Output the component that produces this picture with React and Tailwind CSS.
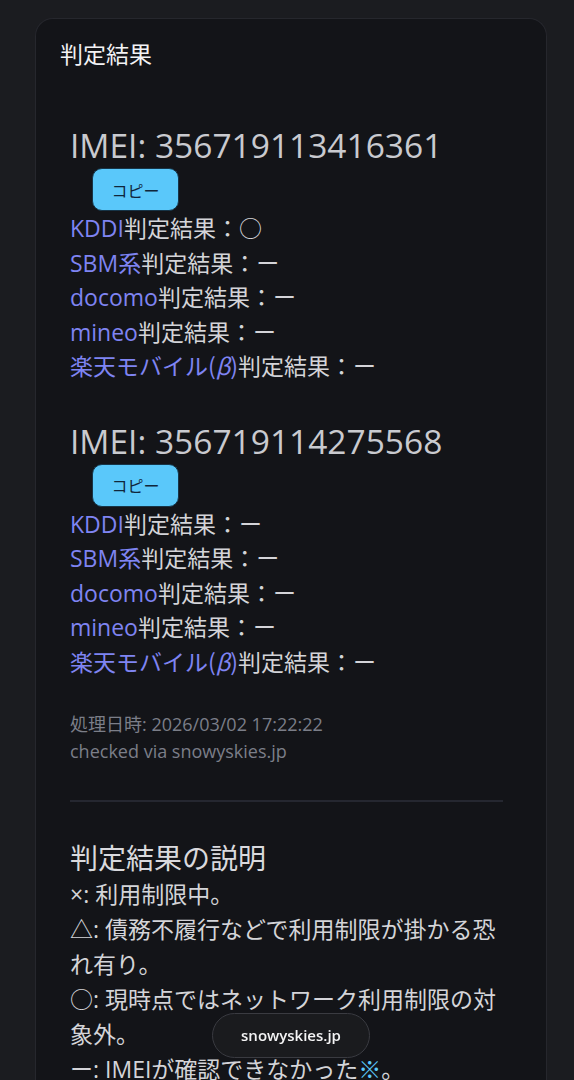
const font = { fontFamily: '"Open Sans", "Noto Sans CJK JP", sans-serif' };
const cjk = { fontFamily: '"Noto Sans CJK JP", sans-serif' };

const carriers = [
  { name: "KDDI", key: "kddi" },
  { name: "SBM系", key: "sbm" },
  { name: "docomo", key: "docomo" },
  { name: "mineo", key: "mineo" },
  { name: "楽天モバイル", beta: true, key: "rakuten" },
];

const results = [
  { imei: "356719113416361", status: { kddi: "○", sbm: "ー", docomo: "ー", mineo: "ー", rakuten: "ー" } },
  { imei: "356719114275568", status: { kddi: "ー", sbm: "ー", docomo: "ー", mineo: "ー", rakuten: "ー" } },
];

function ResultBlock({ item, first }) {
  return (
    <div className={first ? "mt-[58px]" : "mt-[39px]"}>
      <p className="text-[33.5px] leading-[36px] text-[#c9cacf]">IMEI: {item.imei}</p>
      <button className="mt-[5px] ml-[22px] w-[87px] h-[43px] rounded-[10px] border border-[#163447] bg-[#5ac8fa] text-[16px] text-[#10263a]" style={cjk}>
        コピー
      </button>
      <ul className="text-[23px] leading-[34.5px] text-[#d4d4d8]">
        {carriers.map((c) => (
          <li key={c.key}>
            <span className="text-[#7f84f2]">
              {c.name}
              {c.beta && (
                <span className="leading-none" style={cjk}>
                  (<span className="italic">β</span>)
                </span>
              )}
            </span>
            判定結果：{item.status[c.key]}
          </li>
        ))}
      </ul>
    </div>
  );
}

export default function App() {
  return (
    <div className="min-h-screen bg-[#1b1c20] pl-[35px] pr-[27px] pt-[18px]" style={font}>
      <div className="rounded-t-[18px] border border-b-0 border-[#26272d] bg-[#131418] pl-[24px] pr-[33px] pt-[20px] pb-10">
        <h1 className="text-[23px] leading-[30px] text-[#f2f2f4]">判定結果</h1>

        <div className="px-[10px]">
          {results.map((item, i) => (
            <ResultBlock key={item.imei} item={item} first={i === 0} />
          ))}

          <div className="mt-[32px] text-[18px] leading-[27px] text-[#7b7e88]">
            <p>処理日時: 2026/03/02 17:22:22</p>
            <p>checked via snowyskies.jp</p>
          </div>

          <div className="mt-[35px] h-[2px] bg-[#252730]" />

          <h2 className="mt-[39px] text-[28px] leading-[34px] text-[#d9d9dd]">判定結果の説明</h2>
          <div className="mt-[2px] text-[23px] leading-[35px] text-[#d4d4d8]">
            <p>×: 利用制限中。</p>
            <p>△: 債務不履行などで利用制限が掛かる恐れ有り。</p>
            <p>○: 現時点ではネットワーク利用制限の対象外。</p>
            <p>
              ー: IMEIが確認できなかった<span className="text-[#5ac8fa]">※</span>。
            </p>
            <p>※: 入力されたIMEIが正しいかご確認ください。</p>
          </div>
        </div>
      </div>

      <div className="fixed left-[212px] bottom-[22px] flex h-[45px] w-[158px] items-center justify-center rounded-full border border-[#3a3b41] bg-[#1a1b1f]/95 text-[15px] font-semibold text-[#f4f4f5]">
        snowyskies.jp
      </div>
    </div>
  );
}
